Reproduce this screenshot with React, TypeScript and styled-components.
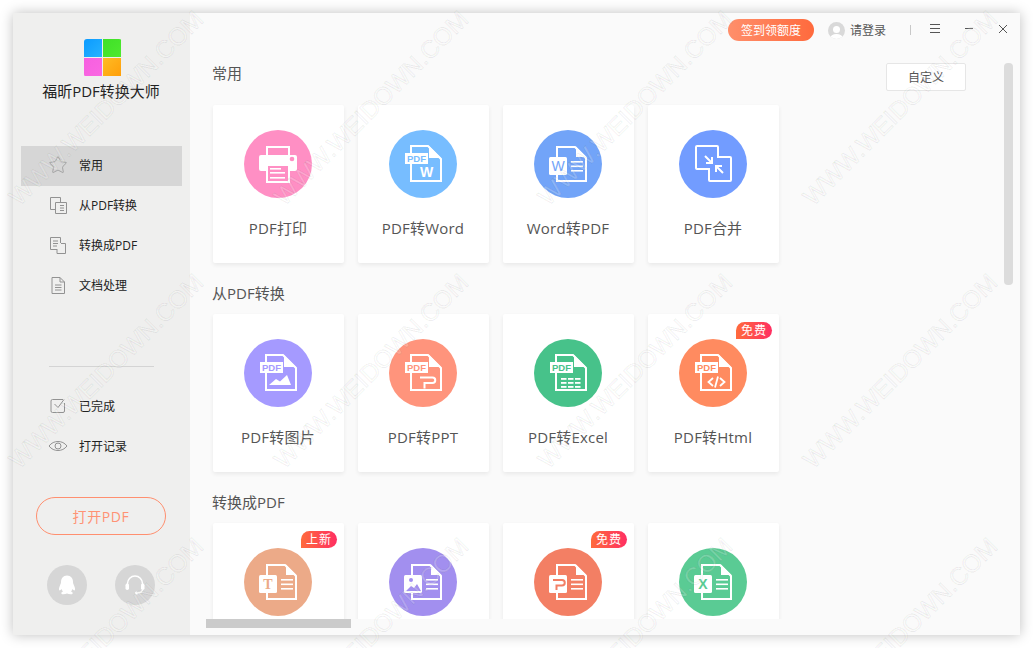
import React from "react";
import styled, { createGlobalStyle } from "styled-components";
import { Star } from "lucide-react";

const GlobalStyle = createGlobalStyle`
  html, body {
    margin: 0;
    padding: 0;
    background: #fff;
    overflow: hidden;
  }
  * {
    box-sizing: border-box;
  }
  body {
    font-family: "Open Sans", "Noto Sans CJK SC", sans-serif;
  }
`;

const Page = styled.div`
  position: relative;
  width: 1033px;
  height: 648px;
  padding: 13px;
  background: #fff;
`;

const Window = styled.div`
  display: flex;
  width: 1007px;
  height: 622px;
  box-shadow: 0 0 12px rgba(0, 0, 0, 0.25);
`;

const Sidebar = styled.aside`
  display: flex;
  flex-direction: column;
  align-items: center;
  width: 177px;
  flex-shrink: 0;
  padding-top: 26px;
  background: #efefee;
`;

const Logo = styled.div`
  display: grid;
  grid-template-columns: 18px 18px;
  grid-template-rows: 18px 18px;
  gap: 1px;
  width: 38px;
  height: 38px;
  margin-left: 3px;
  border-radius: 3px;
  overflow: hidden;
`;

const LogoCell = styled.div<{ $from: string; $to: string }>`
  background: linear-gradient(135deg, ${(p) => p.$from}, ${(p) => p.$to});
`;

const AppName = styled.div`
  margin-top: 4px;
  margin-bottom: 45px;
  margin-right: 1px;
  font-size: 15px;
  line-height: 20px;
  color: #222;
  white-space: nowrap;
`;

const Nav = styled.nav`
  width: 161px;
`;

const NavItem = styled.div<{ $active?: boolean; $lift?: boolean }>`
  display: flex;
  align-items: center;
  gap: 11px;
  height: 40px;
  padding-left: 27px;
  padding-bottom: ${(p) => (p.$lift ? 2 : 0)}px;
  font-size: 12px;
  color: #222;
  background: ${(p) => (p.$active ? "#d6d6d6" : "transparent")};
`;

const NavIcon = styled.span`
  display: flex;
  align-items: center;
  justify-content: center;
  width: 20px;
  height: 20px;
  color: #929292;
`;

const Divider = styled.div`
  width: 105px;
  height: 1px;
  margin: 60px 0 19px;
  background: #d4d4d4;
`;

const OpenButton = styled.button`
  width: 130px;
  height: 38px;
  margin-top: 31px;
  margin-right: 1px;
  border: 1px solid #ff8f6f;
  border-radius: 19px;
  background: transparent;
  color: #ff9274;
  font: inherit;
  font-size: 14px;
  letter-spacing: 0.6px;
`;

const SupportRow = styled.div`
  display: flex;
  gap: 28px;
  margin-top: 30px;
  margin-right: 1px;
`;

const SupportIcon = styled.div`
  display: flex;
  align-items: center;
  justify-content: center;
  width: 40px;
  height: 40px;
  border-radius: 50%;
  background: #d6d6d6;
  color: #fff;
`;

const Main = styled.main`
  position: relative;
  display: flex;
  flex-direction: column;
  flex: 1;
  min-width: 0;
  height: 622px;
  padding-bottom: 16px;
  background: #fafafa;
`;

const TopBar = styled.header`
  display: flex;
  align-items: center;
  justify-content: flex-end;
  height: 22px;
  margin: 6px 0 22px;
  padding-right: 13px;
  flex-shrink: 0;
`;

const SignButton = styled.button`
  width: 86px;
  height: 22px;
  padding: 0;
  border: 0;
  border-radius: 11px;
  background: linear-gradient(90deg, #ff8f6b, #ff6a3d);
  color: #fff;
  font: inherit;
  font-size: 12px;
`;

const Avatar = styled.div`
  position: relative;
  width: 17px;
  height: 17px;
  margin-left: 14px;
  border-radius: 50%;
  background: #d9d9d9;
  overflow: hidden;
`;

const AvatarHead = styled.div`
  position: absolute;
  left: 5px;
  top: 4px;
  width: 7px;
  height: 7px;
  border-radius: 50%;
  background: #fff;
`;

const AvatarBody = styled.div`
  position: absolute;
  left: 2px;
  top: 12px;
  width: 13px;
  height: 9px;
  border-radius: 50%;
  background: #fff;
`;

const LoginText = styled.span`
  width: 37px;
  margin-left: 5px;
  font-size: 12px;
  color: #555;
  white-space: nowrap;
`;

const BarSeparator = styled.div`
  width: 1px;
  height: 10px;
  margin-left: 23px;
  margin-right: 19px;
  background: #c8c8c8;
`;

const WinButton = styled.svg<{ $gap?: number }>`
  display: block;
  margin-left: ${(p) => p.$gap ?? 0}px;
  margin-top: -3px;
  flex-shrink: 0;
  stroke: #555;
  stroke-width: 1;
  fill: none;
`;

const Content = styled.div`
  flex: 1;
  min-height: 0;
  padding-left: 23px;
  overflow: hidden;
`;

const SectionHead = styled.div<{ $first?: boolean }>`
  display: flex;
  align-items: flex-start;
  justify-content: space-between;
  height: ${(p) => (p.$first ? 28 : 20)}px;
  margin-top: ${(p) => (p.$first ? 0 : 20)}px;
  margin-bottom: ${(p) => (p.$first ? 14 : 11)}px;
  padding-right: 54px;
`;

const SectionTitle = styled.h2`
  margin: 0 0 0 -1px;
  font-size: 15px;
  font-weight: 400;
  line-height: 20px;
  color: #555;
`;

const CustomButton = styled.button`
  width: 80px;
  height: 28px;
  padding: 0;
  border: 1px solid #e6e6e6;
  border-radius: 2px;
  background: #fff;
  color: #555;
  font: inherit;
  font-size: 12px;
`;

const CardRow = styled.div`
  display: flex;
  gap: 14px;
`;

const Card = styled.div`
  position: relative;
  display: flex;
  flex-direction: column;
  align-items: center;
  width: 131px;
  height: 158px;
  padding: 25px 1px 0 0;
  border-radius: 2px;
  background: #fff;
  box-shadow: 0 2px 4px rgba(0, 0, 0, 0.07);
`;

const Circle = styled.div<{ $color: string }>`
  width: 68px;
  height: 68px;
  border-radius: 50%;
  background: ${(p) => p.$color};
`;

const CardLabel = styled.div`
  margin-top: 20px;
  font-size: 15px;
  line-height: 20px;
  letter-spacing: 0.2px;
  color: #555;
  white-space: nowrap;
`;

const Badge = styled.span`
  position: absolute;
  top: 8px;
  right: 7px;
  width: 36px;
  height: 17px;
  border-radius: 8.5px 8.5px 8.5px 0;
  background: linear-gradient(90deg, #ff6a3c, #ff2f62);
  color: #fff;
  font-size: 12px;
  line-height: 17px;
  letter-spacing: 1px;
  text-align: center;
  white-space: nowrap;
`;

const ScrollY = styled.div`
  position: absolute;
  top: 50px;
  right: 7px;
  width: 9px;
  height: 222px;
  border-radius: 4px;
  background: #dcdcdc;
`;

const ScrollX = styled.div`
  position: absolute;
  left: 16px;
  bottom: 7px;
  width: 145px;
  height: 9px;
  background: #cbcbcb;
`;

const Watermark = styled.svg`
  position: absolute;
  top: 0;
  left: 0;
  pointer-events: none;
`;

const WatermarkText = styled.text`
  font-family: "Liberation Sans", sans-serif;
  font-size: 24.5px;
  fill: rgba(255, 255, 255, 0.2);
  stroke: rgba(0, 0, 0, 0.06);
  stroke-width: 1.2;
`;

const Line = ({ x, y, w, h = 1.6 }: { x: number; y: number; w: number; h?: number }) => (
  <rect x={x} y={y} width={w} height={h} fill="#fff" />
);

// document with the PDF tag on its left edge
const PdfDoc = ({ color, children }: { color: string; children: React.ReactNode }) => (
  <svg width="68" height="68" viewBox="0 0 68 68">
    <path d="M22 24V16H39L52 29V51H22V34" fill="none" stroke="#fff" strokeWidth="2" />
    <path d="M40 16L52 28H40Z" fill="#fff" />
    <rect x="16" y="23" width="23" height="11" fill="#fff" />
    <text
      x="27.5"
      y="32"
      textAnchor="middle"
      fontFamily="Liberation Sans, sans-serif"
      fontWeight="700"
      fontSize="9.5"
      fill={color}
    >
      PDF
    </text>
    {children}
  </svg>
);

// document with text lines and a square format tag in front of it
const SourceDoc = ({ children }: { children: React.ReactNode }) => (
  <svg width="68" height="68" viewBox="0 0 68 68">
    <path d="M23 27V17H41L52 28V51H23V45" fill="none" stroke="#fff" strokeWidth="2" />
    <path d="M42 16.5L52.5 27H42Z" fill="#fff" />
    <rect x="15" y="27" width="18" height="18" rx="1.5" fill="#fff" />
    <Line x={37} y={31} w={12} />
    <Line x={37} y={35.5} w={12} />
    <Line x={37} y={40} w={12} />
    {children}
  </svg>
);

const TagLetter = ({ color, letter, serif }: { color: string; letter: string; serif?: boolean }) => (
  <text
    x="24"
    y="41"
    textAnchor="middle"
    fontFamily={serif ? "Liberation Serif, serif" : "Liberation Sans, sans-serif"}
    fontWeight={letter === "W" ? 400 : 700}
    fontSize="14"
    fill={color}
  >
    {letter}
  </text>
);

const PrintIcon = ({ color }: { color: string }) => (
  <svg width="68" height="68" viewBox="0 0 68 68">
    <path d="M23 25V17H45V25" fill="none" stroke="#fff" strokeWidth="2" />
    <path d="M17 25H51a2 2 0 0 1 2 2V39a2 2 0 0 1-2 2H46V34H22V41H17a2 2 0 0 1-2-2V27a2 2 0 0 1 2-2Z" fill="#fff" />
    <circle cx="48" cy="29" r="2.3" fill={color} />
    <rect x="23" y="35" width="22" height="17" fill={color} stroke="#fff" strokeWidth="2" />
    <Line x={26} y={38} w={11} />
    <Line x={26} y={42} w={15} />
    <Line x={26} y={47} w={15} />
  </svg>
);

const MergeIcon = () => (
  <svg width="68" height="68" viewBox="0 0 68 68" fill="none" stroke="#fff">
    <path d="M18 16H38a1 1 0 0 1 1 1V27H51a1 1 0 0 1 1 1V50a1 1 0 0 1-1 1H31a1 1 0 0 1-1-1V39H18a1 1 0 0 1-1-1V17a1 1 0 0 1 1-1Z" strokeWidth="2" />
    <path d="M26 26L33 33M33 27V33H27" strokeWidth="2" />
    <path d="M44 43L37 36M37 42V36H43" strokeWidth="2" />
  </svg>
);

const ExcelTable = () => (
  <>
    {[39, 43, 47].map((y) =>
      [27, 34, 41].map((x) => <Line key={`${x}-${y}`} x={x} y={y} w={5.5} h={1.8} />)
    )}
  </>
);

const tools = {
  common: [
    { name: "PDF打印", color: "#ff8fc4", icon: (c: string) => <PrintIcon color={c} /> },
    {
      name: "PDF转Word",
      color: "#77bdff",
      icon: (c: string) => (
        <PdfDoc color={c}>
          <text x="37.5" y="47" textAnchor="middle" fontFamily="Liberation Sans, sans-serif" fontWeight="700" fontSize="14" fill="#fff">
            W
          </text>
        </PdfDoc>
      ),
    },
    {
      name: "Word转PDF",
      color: "#72a4f8",
      icon: (c: string) => (
        <SourceDoc>
          <TagLetter color={c} letter="W" />
        </SourceDoc>
      ),
    },
    { name: "PDF合并", color: "#729cff", icon: () => <MergeIcon /> },
  ],
  fromPdf: [
    {
      name: "PDF转图片",
      color: "#a59aff",
      icon: (c: string) => (
        <PdfDoc color={c}>
          <path d="M25 46L32 40L36 42.5L43 36L47 46Z" fill="#fff" />
        </PdfDoc>
      ),
    },
    {
      name: "PDF转PPT",
      color: "#ff947c",
      icon: (c: string) => (
        <PdfDoc color={c}>
          <path d="M31 38.5H43.5a2.5 2.5 0 0 1 0 5.5H35.5V49.5" fill="none" stroke="#fff" strokeWidth="2" />
        </PdfDoc>
      ),
    },
    {
      name: "PDF转Excel",
      color: "#47c28a",
      icon: (c: string) => (
        <PdfDoc color={c}>
          <ExcelTable />
        </PdfDoc>
      ),
    },
    {
      name: "PDF转Html",
      color: "#ff8b60",
      badge: "免费",
      icon: (c: string) => (
        <PdfDoc color={c}>
          <path d="M34 39L29.5 43L34 47M41 39L45.5 43L41 47M39 37.5L36 48.5" fill="none" stroke="#fff" strokeWidth="1.8" />
        </PdfDoc>
      ),
    },
  ],
  toPdf: [
    {
      color: "#ecaa88",
      badge: "上新",
      icon: (c: string) => (
        <SourceDoc>
          <TagLetter color={c} letter="T" serif />
        </SourceDoc>
      ),
    },
    {
      color: "#a28fef",
      icon: (c: string) => (
        <SourceDoc>
          <circle cx="22" cy="32" r="2" fill={c} />
          <path d="M17 43L22 38L25 40L28 36L32 43Z" fill={c} />
        </SourceDoc>
      ),
    },
    {
      color: "#f37f64",
      badge: "免费",
      icon: (c: string) => (
        <SourceDoc>
          <path d="M19 32H28a2.5 2.5 0 0 1 0 5.5H22.5V42" fill="none" stroke={c} strokeWidth="2" />
        </SourceDoc>
      ),
    },
    {
      color: "#5acb94",
      icon: (c: string) => (
        <SourceDoc>
          <TagLetter color={c} letter="X" />
        </SourceDoc>
      ),
    },
  ],
};

type Tool = {
  name?: string;
  color: string;
  badge?: string;
  icon: (c: string) => React.ReactNode;
};

const ToolCard = ({ tool }: { tool: Tool }) => (
  <Card>
    {tool.badge && <Badge>{tool.badge}</Badge>}
    <Circle $color={tool.color}>{tool.icon(tool.color)}</Circle>
    {tool.name && <CardLabel>{tool.name}</CardLabel>}
  </Card>
);

const SideIcon = ({ children }: { children: React.ReactNode }) => (
  <svg width="20" height="20" viewBox="0 0 20 20" fill="none" stroke="currentColor" strokeWidth="1">
    {children}
  </svg>
);

const navTop = [
  { label: "常用", active: true, icon: <Star size={20} strokeWidth={0.9} /> },
  {
    label: "从PDF转换",
    icon: (
      <SideIcon>
        <path d="M7.5 14.5H2.5V2.5H12.5V7" />
        <path d="M7.5 7.5H18.5V18.5H7.5Z" />
        <path d="M12 10.5H16M12 13H16M12 15.5H16" />
      </SideIcon>
    ),
  },
  {
    label: "转换成PDF",
    icon: (
      <SideIcon>
        <path d="M9 14.5H2.5V2.5H12.5V8" />
        <path d="M13 8.5H17.5V18.5H9V14" />
        <path d="M5 6H10M5 8.5H10M5 11H9" />
      </SideIcon>
    ),
  },
  {
    label: "文档处理",
    icon: (
      <SideIcon>
        <path d="M4 2.5H12L16.5 7V18.5H4Z" />
        <path d="M12 2.5V7H16.5" />
        <path d="M7 10H13.5M7 12.5H13.5M7 15H13.5" />
      </SideIcon>
    ),
  },
];

const navBottom = [
  {
    label: "已完成",
    icon: (
      <SideIcon>
        <path d="M15 3.5H4.5a1.5 1.5 0 0 0-1.5 1.5V15a1.5 1.5 0 0 0 1.5 1.5H15a1.5 1.5 0 0 0 1.5-1.5V7" />
        <path d="M6.5 8L10 11.5L16 3.5" />
      </SideIcon>
    ),
  },
  {
    label: "打开记录",
    icon: (
      <SideIcon>
        <path d="M1 10C3.5 6.8 6.5 5.5 10 5.5C13.5 5.5 16.5 6.8 19 10C16.5 13.2 13.5 14.5 10 14.5C6.5 14.5 3.5 13.2 1 10Z" />
        <circle cx="10" cy="10" r="3" />
      </SideIcon>
    ),
  },
];

const watermarkEnds = [205, 470, 734, 999].flatMap((x) => [21, 284, 548].map((y) => [x, y]));

export default function App() {
  return (
    <Page>
      <GlobalStyle />
      <Window>
        <Sidebar>
          <Logo>
            <LogoCell $from="#0b9bff" $to="#27b2ff" />
            <LogoCell $from="#3fe028" $to="#4fe92f" />
            <LogoCell $from="#f65fe0" $to="#fa68e2" />
            <LogoCell $from="#ffbb24" $to="#ff9f0a" />
          </Logo>
          <AppName>福昕PDF转换大师</AppName>
          <Nav>
            {navTop.map((item) => (
              <NavItem key={item.label} $active={item.active} $lift>
                <NavIcon>{item.icon}</NavIcon>
                {item.label}
              </NavItem>
            ))}
          </Nav>
          <Divider />
          <Nav>
            {navBottom.map((item) => (
              <NavItem key={item.label}>
                <NavIcon>{item.icon}</NavIcon>
                {item.label}
              </NavItem>
            ))}
          </Nav>
          <OpenButton>打开PDF</OpenButton>
          <SupportRow>
            <SupportIcon>
              <svg width="24" height="24" viewBox="0 0 24 24" fill="#fff">
                <path d="M12 2.5C8 2.5 6 5.5 6 9C6 10.5 5.5 11 5 12.5C4 14.5 3.5 17 4.5 17.5C5 17.7 6 16.5 6.5 16C6.8 17.2 7.5 18 8 18.6C6.5 19.2 6 20 6.5 20.7C7 21.5 10 21.5 12 20.5C14 21.5 17 21.5 17.5 20.7C18 20 17.5 19.2 16 18.6C16.5 18 17.2 17.2 17.5 16C18 16.5 19 17.7 19.5 17.5C20.5 17 20 14.5 19 12.5C18.5 11 18 10.5 18 9C18 5.5 16 2.5 12 2.5Z" />
              </svg>
            </SupportIcon>
            <SupportIcon>
              <svg width="24" height="24" viewBox="0 0 24 24" fill="none" stroke="#fff">
                <path d="M4.5 12V10.5a7.5 7.5 0 0 1 15 0V12" strokeWidth="1.5" />
                <rect x="2.5" y="10.5" width="3.5" height="6.5" rx="1.75" fill="#fff" stroke="none" />
                <rect x="18" y="10.5" width="3.5" height="6.5" rx="1.75" fill="#fff" stroke="none" />
                <path d="M19.5 17C19 18.8 17 19.8 14.5 20" strokeWidth="1.2" />
                <circle cx="13.5" cy="20" r="1.5" fill="#fff" stroke="none" />
              </svg>
            </SupportIcon>
          </SupportRow>
        </Sidebar>
        <Main>
          <TopBar>
            <SignButton>签到领额度</SignButton>
            <Avatar>
              <AvatarHead />
              <AvatarBody />
            </Avatar>
            <LoginText>请登录</LoginText>
            <BarSeparator />
            <WinButton width="10" height="10" viewBox="0 0 10 10">
              <path d="M0 0.5H10M0 4.5H10M0 8.5H10" />
            </WinButton>
            <WinButton $gap={25} width="8" height="10" viewBox="0 0 8 10">
              <path d="M0 4.5H8" />
            </WinButton>
            <WinButton $gap={26} width="8" height="10" viewBox="0 0 8 10">
              <path d="M0 1L8 9M8 1L0 9" />
            </WinButton>
          </TopBar>
          <Content>
            <SectionHead $first>
              <SectionTitle>常用</SectionTitle>
              <CustomButton>自定义</CustomButton>
            </SectionHead>
            <CardRow>
              {tools.common.map((tool) => (
                <ToolCard key={tool.name} tool={tool} />
              ))}
            </CardRow>
            <SectionHead>
              <SectionTitle>从PDF转换</SectionTitle>
            </SectionHead>
            <CardRow>
              {tools.fromPdf.map((tool) => (
                <ToolCard key={tool.name} tool={tool} />
              ))}
            </CardRow>
            <SectionHead>
              <SectionTitle>转换成PDF</SectionTitle>
            </SectionHead>
            <CardRow>
              {tools.toPdf.map((tool) => (
                <ToolCard key={tool.color} tool={tool} />
              ))}
            </CardRow>
          </Content>
          <ScrollY />
          <ScrollX />
        </Main>
      </Window>
      <Watermark width="1033" height="648" viewBox="0 0 1033 648">
        {watermarkEnds.map(([x, y]) => (
          <WatermarkText key={`${x}-${y}`} x={x} y={y} textAnchor="end" transform={`rotate(-45 ${x} ${y})`}>
            WWW.WEIDOWN.COM
          </WatermarkText>
        ))}
      </Watermark>
    </Page>
  );
}
